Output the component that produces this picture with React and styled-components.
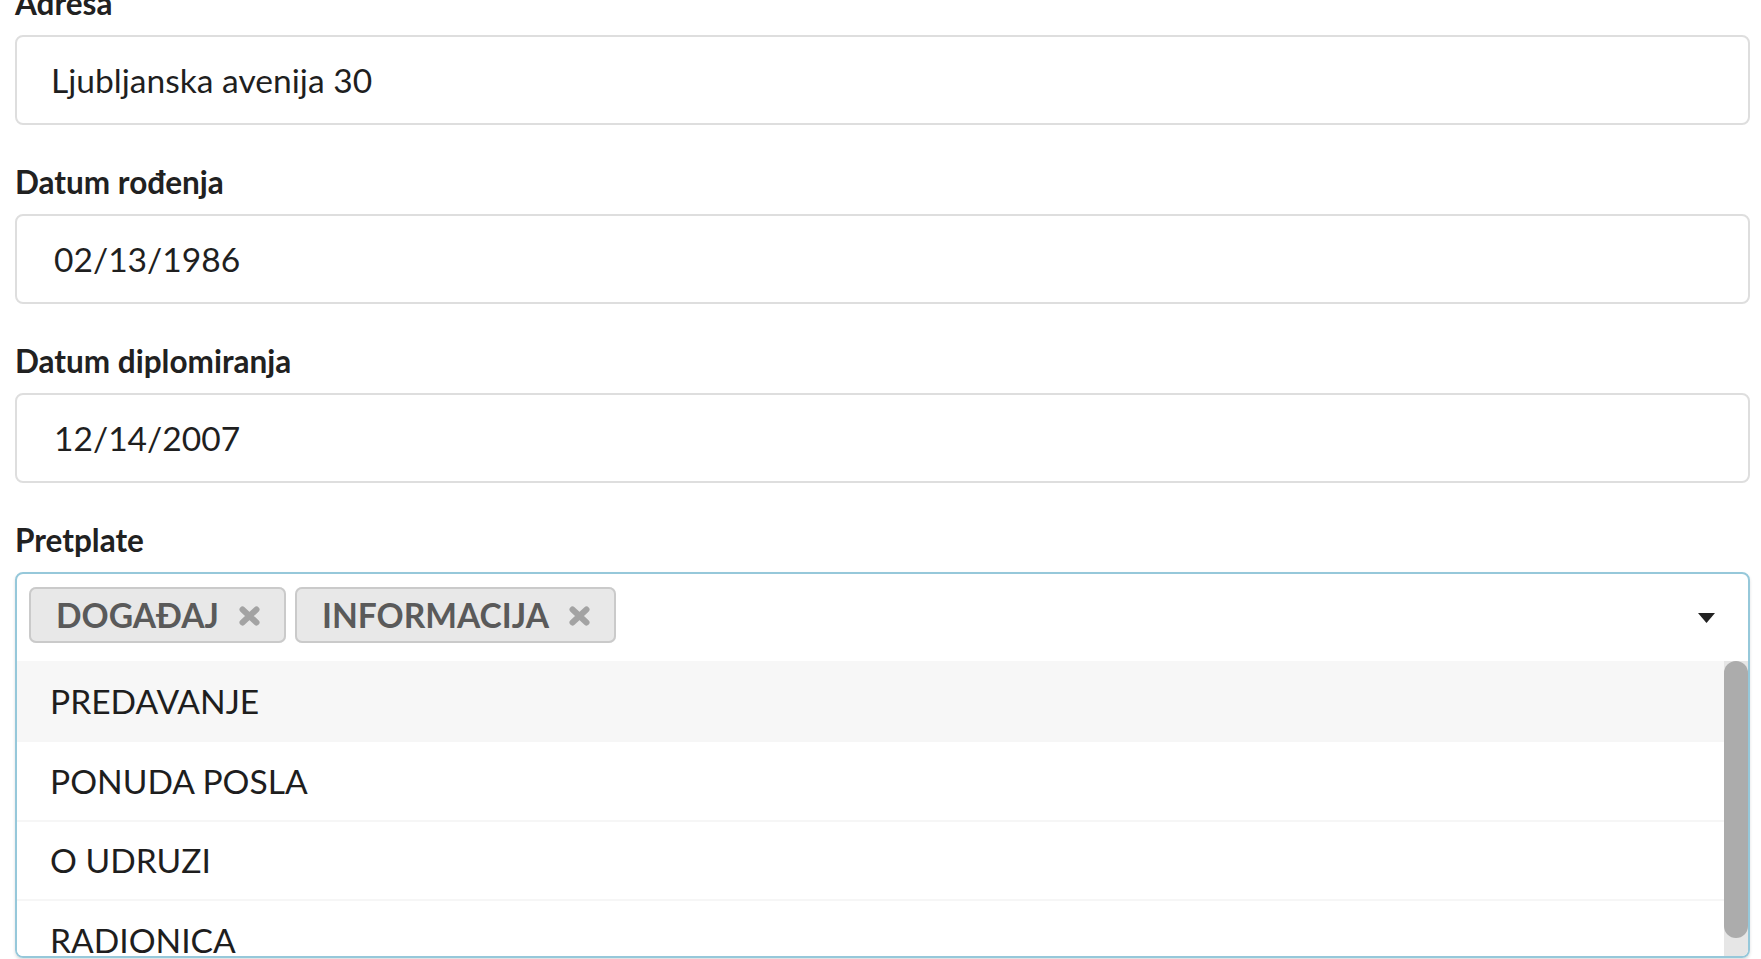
import styled, { createGlobalStyle } from 'styled-components';

const GlobalStyle = createGlobalStyle`
    html, body {
        margin: 0;
        padding: 0;
        background: #ffffff;
        overflow: hidden;
        font-family: Lato, "Open Sans", sans-serif;
    }
`;

const Form = styled.form`
    margin-top: -13px;
    padding: 0 11px 0 15px;
`;

const Field = styled.div`
    margin-bottom: 41px;
`;

const Label = styled.label`
    display: block;
    font-size: 31.5px;
    line-height: 32px;
    font-weight: 700;
    color: #212121;
    margin-bottom: 16px;
`;

const TextInput = styled.input`
    display: block;
    width: 100%;
    height: 90px;
    box-sizing: border-box;
    border: 2px solid #dedede;
    border-radius: 8px;
    padding: 0 33px 0 ${(props) => (props.$date ? '37px' : '34px')};
    font-family: Lato, sans-serif;
    font-size: 33.6px;
    color: #1f1f1f;
    background: #ffffff;
    outline: none;
`;

const SelectBox = styled.div`
    border: 2px solid #96c8da;
    border-radius: 8px;
    overflow: hidden;
    box-shadow: 0 2px 3px 0 rgba(34, 36, 38, 0.15);
`;

const Control = styled.div`
    display: flex;
    align-items: flex-start;
    padding: 13px 33px 18px 12px;
`;

const Tags = styled.div`
    display: flex;
    gap: 9px;
`;

const Tag = styled.span`
    display: inline-flex;
    align-items: center;
    gap: 20px;
    height: 56px;
    box-sizing: border-box;
    padding: 0 26px 0 27px;
    background: #e8e8e8;
    box-shadow: inset 0 0 0 2px #cacaca;
    border-radius: 7px;
    font-size: 33.6px;
    font-weight: 700;
    color: #5a5a5a;
`;

const DeleteIcon = styled.svg`
    width: 21px;
    height: 20px;
    stroke: #a3a3a3;
    stroke-width: 6;
    stroke-linecap: round;
    flex-shrink: 0;
    margin-top: 2px;
`;

const Caret = styled.svg`
    margin-left: auto;
    margin-top: 6px;
    align-self: center;
    width: 17px;
    height: 10px;
    fill: #222222;
`;

const Menu = styled.div`
    display: flex;
    height: 295px;
`;

const OptionList = styled.div`
    flex: 1;
    overflow: hidden;
`;

const ScrollTrack = styled.div`
    width: 24px;
    flex-shrink: 0;
    background: #e6e6e6;
`;

const ScrollThumb = styled.div`
    height: 277px;
    border-radius: 12px;
    background: #acacac;
`;

const Option = styled.div`
    display: flex;
    align-items: center;
    height: 79.3px;
    box-sizing: border-box;
    padding: 0 33px;
    border-top: 2px solid #f6f6f6;
    font-size: 33.6px;
    color: #1e1e1e;
    background: ${(props) => (props.$active ? '#f7f7f7' : '#ffffff')};

    &:first-child {
        border-top: none;
    }
`;

const fields = [
    { label: 'Adresa', value: 'Ljubljanska avenija 30' },
    { label: 'Datum rođenja', value: '02/13/1986', date: true },
    { label: 'Datum diplomiranja', value: '12/14/2007', date: true },
];

const selected = ['DOGAĐAJ', 'INFORMACIJA'];
const options = ['PREDAVANJE', 'PONUDA POSLA', 'O UDRUZI', 'RADIONICA'];

function TimesIcon() {
    return (
        <DeleteIcon viewBox="0 0 21 20">
            <path d="M3.5 3.5 L17.5 16.5 M17.5 3.5 L3.5 16.5" fill="none" />
        </DeleteIcon>
    );
}

export default function App() {
    return (
        <>
            <GlobalStyle />
            <Form onSubmit={(e) => e.preventDefault()}>
                {fields.map((f) => (
                    <Field key={f.label}>
                        <Label>{f.label}</Label>
                        <TextInput type="text" value={f.value} $date={f.date} readOnly />
                    </Field>
                ))}
                <Field>
                    <Label>Pretplate</Label>
                    <SelectBox>
                        <Control>
                            <Tags>
                                {selected.map((s) => (
                                    <Tag key={s}>
                                        {s}
                                        <TimesIcon />
                                    </Tag>
                                ))}
                            </Tags>
                            <Caret viewBox="0 0 17 10">
                                <polygon points="0,0 17,0 8.5,10" />
                            </Caret>
                        </Control>
                        <Menu>
                            <OptionList>
                                {options.map((o, i) => (
                                    <Option key={o} $active={i === 0}>
                                        {o}
                                    </Option>
                                ))}
                            </OptionList>
                            <ScrollTrack>
                                <ScrollThumb />
                            </ScrollTrack>
                        </Menu>
                    </SelectBox>
                </Field>
            </Form>
        </>
    );
}
